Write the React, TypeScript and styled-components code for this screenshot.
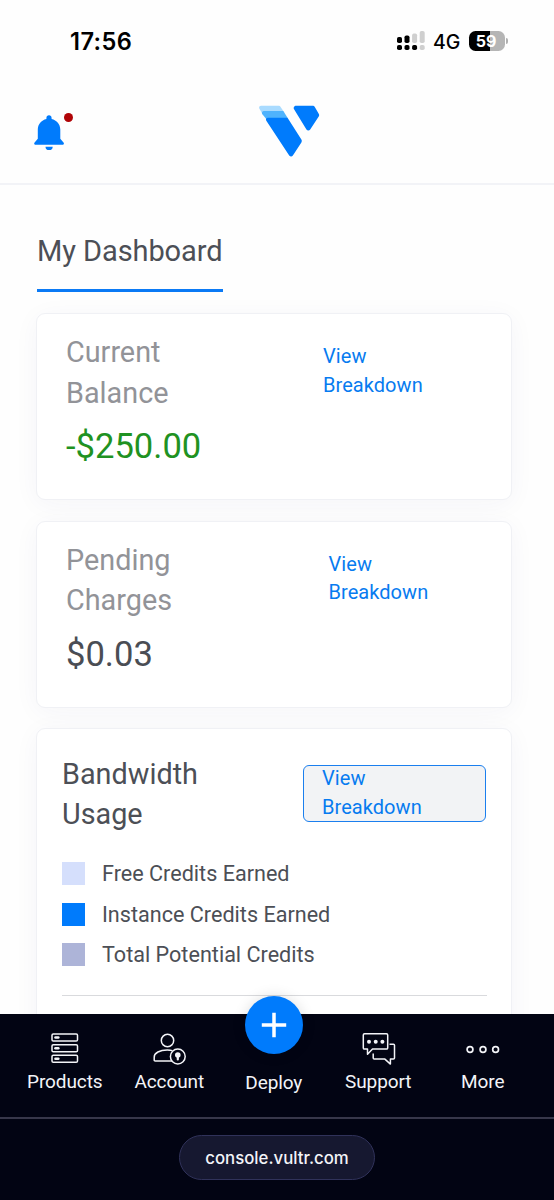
import React from "react";
import styled, { createGlobalStyle } from "styled-components";

const GlobalStyle = createGlobalStyle`
  *, *::before, *::after { box-sizing: border-box; }
  html, body { margin: 0; padding: 0; background: #fefefe; }
  body { font-family: Roboto, "Liberation Sans", sans-serif; color: #4c4f56; overflow: hidden; }
  h1, h2, p, ul { margin: 0; padding: 0; font-weight: 400; }
  a { text-decoration: none; }
`;

const Screen = styled.div`
  display: flex;
  flex-direction: column;
  width: 554px;
  height: 1200px;
  overflow: hidden;
`;

const StatusBar = styled.div`
  display: flex;
  align-items: center;
  flex: none;
  height: 82px;
  padding: 0 46px 0 70px;
  font-family: Inter, "Liberation Sans", sans-serif;
  color: #000;
`;

const Clock = styled.time`
  flex: 1;
  font-size: 23.6px;
  font-weight: 600;
  letter-spacing: 0.4px;
`;

const Network = styled.span`
  margin: 2px 8px 0 8px;
  width: 28px;
  font-size: 19.5px;
  font-weight: 500;
  letter-spacing: -0.1px;
`;

const Battery = styled.div`
  display: flex;
  align-items: center;
`;

const BatteryBody = styled.div`
  width: 36px;
  height: 20px;
  border-radius: 6.5px;
  background: linear-gradient(90deg, #000 59%, #b5b5b5 59%);
  color: #fff;
  font-size: 16px;
  font-weight: 700;
  line-height: 20px;
  text-align: center;
  padding-right: 2px;
`;

const BatteryTip = styled.div`
  width: 2px;
  height: 6px;
  margin-left: 1px;
  border-radius: 0 3px 3px 0;
  background: #b0b0b0;
`;

const Header = styled.header`
  display: grid;
  grid-template-columns: 224px 62px 1fr;
  flex: none;
  height: 103px;
  padding: 0 34px;
  border-bottom: 2px solid #f2f3f7;
`;

const BellButton = styled.div`
  position: relative;
  width: 40px;
  margin-top: 33px;
`;

const AlertDot = styled.span`
  position: absolute;
  top: -2.5px;
  left: 30px;
  width: 9px;
  height: 9px;
  border-radius: 50%;
  background: #b00407;
`;

const LogoBox = styled.div`
  padding-top: 23px;
  margin-left: 1px;
`;

const Main = styled.main`
  flex: 1;
  min-height: 0;
  overflow: hidden;
  padding: 46px 42px 0 36px;
`;

const Title = styled.h1`
  width: 186px;
  height: 61px;
  margin: 0 0 21.2px 1px;
  border-bottom: 3px solid #0b7af5;
  font-size: 29px;
  line-height: 41px;
  letter-spacing: -0.08px;
  white-space: nowrap;
`;

const Card = styled.section<{ $tall?: boolean }>`
  height: ${(p) => (p.$tall ? "320px" : "187px")};
  margin-top: 20.4px;
  padding: ${(p) => (p.$tall ? "25px 24px 0 25px" : "18px 28px 0 29px")};
  border: 1.5px solid #f0f1f5;
  border-radius: 9px;
  background: #fff;
  box-shadow: 0 4px 26px rgba(40, 40, 110, 0.045);
`;

const CardHead = styled.div`
  display: flex;
  align-items: flex-start;
`;

const CardTitle = styled.h2<{ $width: number; $muted?: boolean }>`
  width: ${(p) => p.$width}px;
  color: ${(p) => (p.$muted ? "#929398" : "#4c4f56")};
  font-size: 28.8px;
  line-height: 40.4px;
`;

const BreakdownLink = styled.a<{ $boxed?: boolean }>`
  width: ${(p) => (p.$boxed ? "183px" : "104px")};
  margin-top: ${(p) => (p.$boxed ? "11px" : "10px")};
  padding: ${(p) => (p.$boxed ? "0 60px 0 18px" : "0")};
  height: ${(p) => (p.$boxed ? "57px" : "58px")};
  border: ${(p) => (p.$boxed ? "1.5px solid #1b7fee" : "none")};
  border-radius: 6px;
  background: ${(p) => (p.$boxed ? "#f2f3f5" : "transparent")};
  color: #077bf0;
  font-size: 20px;
  line-height: 28.9px;
  letter-spacing: 0.06px;

  & > span {
    display: block;
    margin-top: ${(p) => (p.$boxed ? "-2px" : "0")};
  }
`;

const Amount = styled.p<{ $color: string }>`
  margin-top: 9.2px;
  color: ${(p) => p.$color};
  font-size: 34.6px;
  line-height: 48px;
`;

const Legend = styled.ul`
  display: flex;
  flex-direction: column;
  height: 161.2px;
  padding-top: 19px;
  list-style: none;
  border-bottom: 1.5px solid #d9dadd;
`;

const LegendItem = styled.li`
  display: flex;
  align-items: center;
  gap: 17px;
  height: 40.3px;
  font-size: 21.6px;
  white-space: nowrap;
`;

const Swatch = styled.span<{ $color: string }>`
  width: 23px;
  height: 23px;
  background: ${(p) => p.$color};
`;

const Footer = styled.footer`
  position: relative;
  z-index: 1;
  flex: none;
  height: 186px;
  background: #020413;
  color: #f3f4f8;
`;

const Nav = styled.nav`
  display: grid;
  grid-template-columns: repeat(5, 104.5px);
  height: 105px;
  padding-left: 12.5px;
  border-bottom: 2px solid #37374a;
`;

const NavItem = styled.a`
  display: flex;
  flex-direction: column;
  align-items: center;
  padding-top: 15px;
  font-size: 19px;
  line-height: 24px;
  letter-spacing: -0.1px;
`;

const NavIcon = styled.span<{ $drop?: number }>`
  display: flex;
  height: 41px;
  padding-top: ${(p) => p.$drop ?? 0}px;
  margin-left: 1px;
`;

const DeployButton = styled.span`
  display: flex;
  align-items: center;
  justify-content: center;
  width: 58px;
  height: 58px;
  margin-top: -33px;
  margin-bottom: 17px;
  border-radius: 50%;
  background: #007bfc;
  box-shadow: 0 0 14px rgba(0, 0, 0, 0.13);
`;

const AddressBar = styled.div`
  display: flex;
  justify-content: center;
  padding-top: 16px;
`;

const AddressPill = styled.div`
  width: 196px;
  height: 45px;
  border: 1.5px solid #30325a;
  border-radius: 23px;
  background: #161830;
  font-family: Inter, "Liberation Sans", sans-serif;
  font-size: 16.8px;
  font-weight: 500;
  line-height: 44px;
  text-align: center;
`;

const SignalIcon = () => (
  <svg width="28" height="20" viewBox="0 0 28 20">
    <g fill="#000">
      <rect x="0" y="6" width="5" height="6" rx="1.8" />
      <rect x="7.5" y="4.5" width="5" height="7.5" rx="1.8" />
      <rect x="0" y="14" width="5" height="5" rx="1.8" />
      <rect x="7.5" y="14" width="5" height="5" rx="1.8" />
      <rect x="15.1" y="14" width="5" height="5" rx="1.8" />
    </g>
    <g fill="#cfcfcf">
      <rect x="15.1" y="2.5" width="5" height="9.5" rx="1.8" />
      <rect x="22.7" y="0" width="5" height="12" rx="1.8" />
      <rect x="22.7" y="14" width="5" height="5" rx="1.8" />
    </g>
  </svg>
);

const BellIcon = () => (
  <svg width="31" height="36" viewBox="0 0 31 36" fill="#007bfc">
    <path d="M15 .3c-1.5 0-2.6 1.1-2.6 2.6v1C7.4 5 3.8 9.2 3.8 14.5v9.2L.6 27.4c-.8.9-.4 2.3.8 2.3h27.3c1.2 0 1.6-1.4.8-2.3l-3.2-3.7v-9.2c0-5.3-3.6-9.5-8.7-10.6v-1C17.6 1.4 16.5.3 15 .3z" />
    <path d="M11.5 31.7h7.2a3.6 3.4 0 0 1-7.2 0z" />
  </svg>
);

const VultrLogo = () => (
  <svg width="61.4" height="54" viewBox="0 0 62 54">
    <path fill="#a9dbff" d="M2 .5h17.500c1.100 0 1.900.5 2.500 1.400L24.800 6 16 14 4 9.500.4 3.400C-.4 2.100.5.500 2 .5z" />
    <path fill="#4fb3fd" d="M5 5.800h19.600L28.800 12.500 20 20 9 15.800 3.200 8.800c-.8-1.300.3-3 1.800-3z" />
    <path fill="#007bfc" d="M9 12.500h19.800l14 22.200c.6 1 .6 1.800 0 2.800l-8.600 13.300c-.9 1.400-2.800 1.400-3.700 0L7.400 15.700c-.9-1.500-.1-3.200 1.600-3.200z" />
    <path fill="#007bfc" d="M37.500.5H54c1.100 0 1.900.5 2.500 1.400l3.800 6.600c.6 1 .6 1.900 0 2.900l-8.600 13c-.9 1.400-2.900 1.400-3.800 0L35.400 3.900C34.400 2.400 35.600.5 37.500.5z" />
  </svg>
);

const ServerIcon = () => (
  <svg width="28" height="31" viewBox="0 0 28 31" fill="none" stroke="#f3f4f8" strokeWidth="1.5">
    {[4.5, 15.2, 25.7].map((y) => (
      <g key={y}>
        <rect x="1" y={y - 3.5} width="25.5" height="7" rx="1.3" />
        <path d={`M4.500 ${y}h2.800`} strokeWidth="2.6" strokeLinecap="round" />
      </g>
    ))}
  </svg>
);

const AccountIcon = () => (
  <svg width="34" height="33" viewBox="0 0 34 33" fill="none" stroke="#f3f4f8" strokeWidth="1.5">
    <circle cx="14.5" cy="7.5" r="6.2" />
    <path d="M19 28H2.200c-.6 0-1-.4-1-1v-2.800c0-4.200 5.500-7.200 13-7.200 2 0 3.800.2 5.200.6" />
    <circle cx="24.8" cy="23.5" r="7.4" fill="#020413" />
    <circle cx="24.8" cy="22" r="2.8" fill="#f3f4f8" stroke="none" />
    <path d="M24.800 22v4.500" strokeWidth="2.2" strokeLinecap="round" />
  </svg>
);

const ChatIcon = () => (
  <svg width="34" height="34" viewBox="0 0 34 34" fill="none" stroke="#f3f4f8" strokeWidth="1.5" strokeLinejoin="round">
    <path d="M2.500 1.700h22c.7 0 1.200.5 1.200 1.200v13c0 .7-.5 1.200-1.200 1.200H10.500l-5 5.200v-5.200h-3c-.7 0-1.200-.5-1.200-1.200v-13c0-.7.500-1.200 1.200-1.200z" />
    <path d="M27.500 12.200h4c.6 0 1 .4 1 1v12.900c0 .6-.4 1-1 1h-3.100v5l-5.500-5H12.200c-.6 0-1-.4-1-1v-4.600" />
    <g fill="#f3f4f8" stroke="none">
      <circle cx="7" cy="9.7" r="2" />
      <circle cx="13.7" cy="9.7" r="2" />
      <circle cx="20.4" cy="9.7" r="2" />
    </g>
  </svg>
);

const MoreIcon = () => (
  <svg width="34" height="34" viewBox="0 0 34 34" fill="none" stroke="#f3f4f8" strokeWidth="1.7">
    <circle cx="4" cy="20.5" r="2.9" />
    <circle cx="17" cy="20.5" r="2.9" />
    <circle cx="29.6" cy="20.5" r="2.9" />
  </svg>
);

const PlusIcon = () => (
  <svg width="26" height="26" viewBox="0 0 26 26" stroke="#fff" strokeWidth="3.5">
    <path d="M13 .8v24.400M.8 13h24.400" />
  </svg>
);

const balances = [
  { title: "Current Balance", amount: "-$250.00", color: "#1f9222", titleWidth: 257 },
  { title: "Pending Charges", amount: "$0.03", color: "#4a4d54", titleWidth: 262.5 },
];

const legend = [
  { label: "Free Credits Earned", color: "#d5dffc" },
  { label: "Instance Credits Earned", color: "#007bfc" },
  { label: "Total Potential Credits", color: "#adb4d8" },
];

const TwoLines = ({ text }: { text: string }) => {
  const [first, second] = text.split(" ");
  return (
    <span>
      {first}
      <br />
      {second}
    </span>
  );
};

export default function App() {
  return (
    <Screen>
      <GlobalStyle />
      <StatusBar>
        <Clock>17:56</Clock>
        <SignalIcon />
        <Network>4G</Network>
        <Battery>
          <BatteryBody>59</BatteryBody>
          <BatteryTip />
        </Battery>
      </StatusBar>
      <Header>
        <BellButton>
          <BellIcon />
          <AlertDot />
        </BellButton>
        <LogoBox>
          <VultrLogo />
        </LogoBox>
      </Header>
      <Main>
        <Title>My Dashboard</Title>
        {balances.map((b) => (
          <Card key={b.title}>
            <CardHead>
              <CardTitle $width={b.titleWidth} $muted>
                <TwoLines text={b.title} />
              </CardTitle>
              <BreakdownLink>
                <TwoLines text="View Breakdown" />
              </BreakdownLink>
            </CardHead>
            <Amount $color={b.color}>{b.amount}</Amount>
          </Card>
        ))}
        <Card $tall>
          <CardHead>
            <CardTitle $width={241}>
              <TwoLines text="Bandwidth Usage" />
            </CardTitle>
            <BreakdownLink $boxed>
              <TwoLines text="View Breakdown" />
            </BreakdownLink>
          </CardHead>
          <Legend>
            {legend.map((item) => (
              <LegendItem key={item.label}>
                <Swatch $color={item.color} />
                {item.label}
              </LegendItem>
            ))}
          </Legend>
        </Card>
      </Main>
      <Footer>
        <Nav>
          <NavItem>
            <NavIcon $drop={4}><ServerIcon /></NavIcon>
            Products
          </NavItem>
          <NavItem>
            <NavIcon $drop={4}><AccountIcon /></NavIcon>
            Account
          </NavItem>
          <NavItem>
            <DeployButton><PlusIcon /></DeployButton>
            Deploy
          </NavItem>
          <NavItem>
            <NavIcon $drop={3}><ChatIcon /></NavIcon>
            Support
          </NavItem>
          <NavItem>
            <NavIcon><MoreIcon /></NavIcon>
            More
          </NavItem>
        </Nav>
        <AddressBar>
          <AddressPill>console.vultr.com</AddressPill>
        </AddressBar>
      </Footer>
    </Screen>
  );
}
